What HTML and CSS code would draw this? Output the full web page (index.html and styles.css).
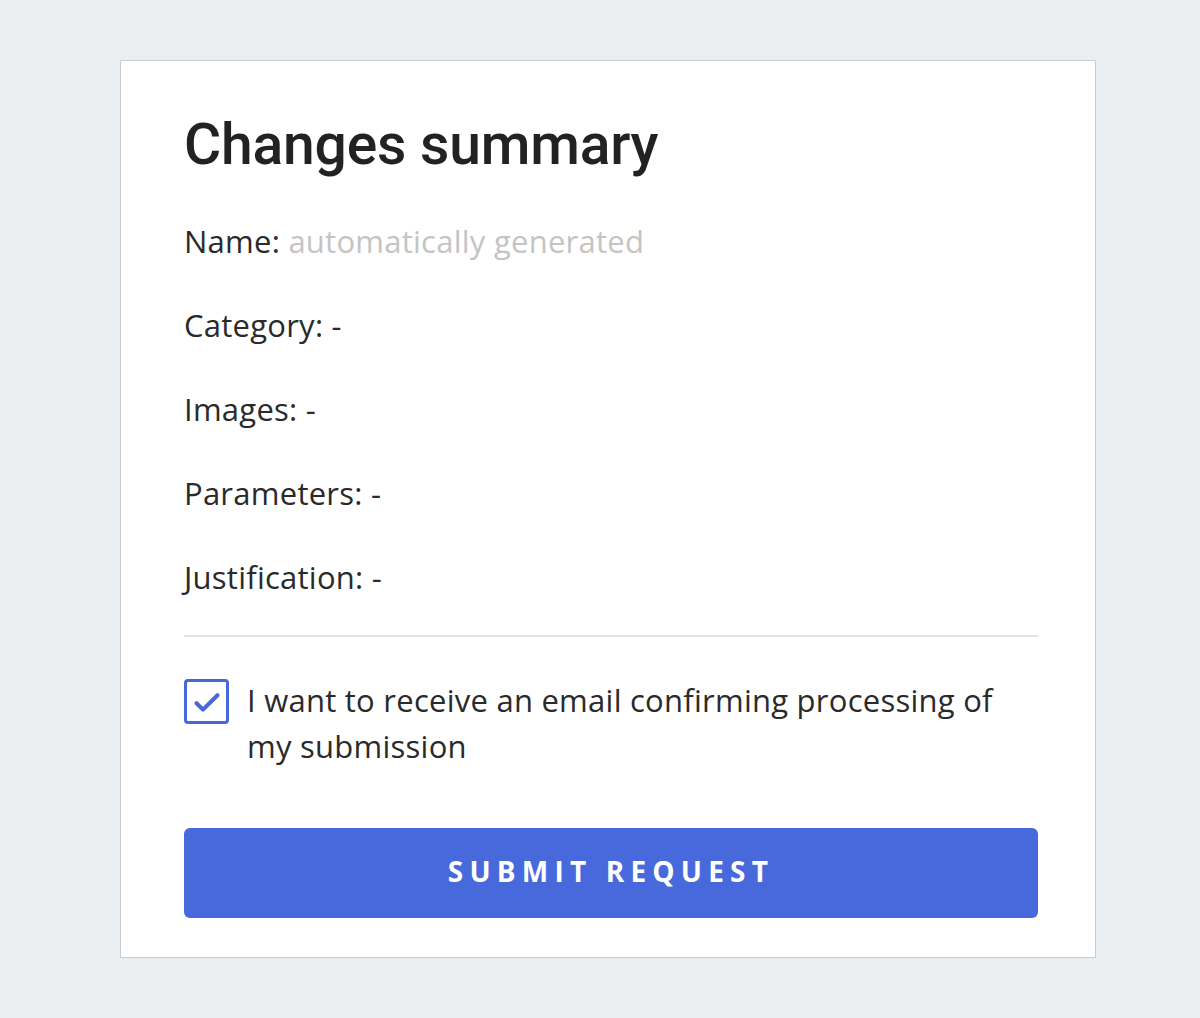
FILE: index.html
```html
<!DOCTYPE html>
<html>
<head>
<meta charset="utf-8">
<link rel="stylesheet" href="styles.css">
</head>
<body>
<div class="page">
  <div class="card">
    <h1 class="title">Changes summary</h1>
    <div class="rows">
      <div class="row">Name: <span class="muted">automatically generated</span></div>
      <div class="row">Category: -</div>
      <div class="row">Images: -</div>
      <div class="row">Parameters: -</div>
      <div class="row">Justification: -</div>
    </div>
    <div class="divider"></div>
    <label class="check">
      <span class="box">
        <svg viewBox="0 0 24 24" width="36" height="36"><path d="M5 12.8l4.3 4.3L19 7.5" fill="none" stroke="#4767dc" stroke-width="2.7" stroke-linecap="round" stroke-linejoin="round"/></svg>
      </span>
      <span class="check-text">I want to receive an email confirming processing of my submission</span>
    </label>
    <button class="submit">SUBMIT REQUEST</button>
  </div>
</div>
</body>
</html>
```

FILE: styles.css
```css
html, body {
  margin: 0;
  padding: 0;
  background: #ebeef1;
}
.page {
  padding: 60px 0 0 120px;
}
.card {
  box-sizing: border-box;
  width: 976px;
  height: 898px;
  background: #fff;
  border: 1px solid #c9cbcd;
  padding: 51px 57px 0 63px;
  font-family: "Open Sans", sans-serif;
  color: #2a2a2a;
}
.title {
  margin: 0;
  font-family: Roboto, sans-serif;
  font-weight: 500;
  font-size: 57px;
  line-height: 66px;
  color: #222;
  letter-spacing: -0.2px;
}
.rows {
  margin-top: 44px;
  display: flex;
  flex-direction: column;
  gap: 46px;
}
.row {
  font-size: 31px;
  line-height: 38px;
  letter-spacing: 0.25px;
}
.muted {
  color: #c4c4c4;
}
.divider {
  margin-top: 39px;
  height: 2px;
  background: #e2e2e2;
}
.check {
  display: flex;
  align-items: flex-start;
  gap: 18px;
  margin-top: 42px;
}
.box {
  box-sizing: border-box;
  flex: none;
  width: 45px;
  height: 45px;
  border: 3px solid #4767dc;
  border-radius: 4px;
  display: flex;
  align-items: center;
  justify-content: center;
}
.check-text {
  font-size: 31px;
  line-height: 46px;
  letter-spacing: 0.25px;
  margin-top: -2px;
  padding-right: 20px;
}
.submit {
  display: block;
  width: 100%;
  height: 90px;
  margin-top: 59px;
  border: none;
  border-radius: 6px;
  background: #4869dc;
  color: #fff;
  font-family: "Open Sans", sans-serif;
  font-weight: 700;
  font-size: 28px;
  letter-spacing: 6.2px;
  padding: 0 0 4px 0;
}
```
